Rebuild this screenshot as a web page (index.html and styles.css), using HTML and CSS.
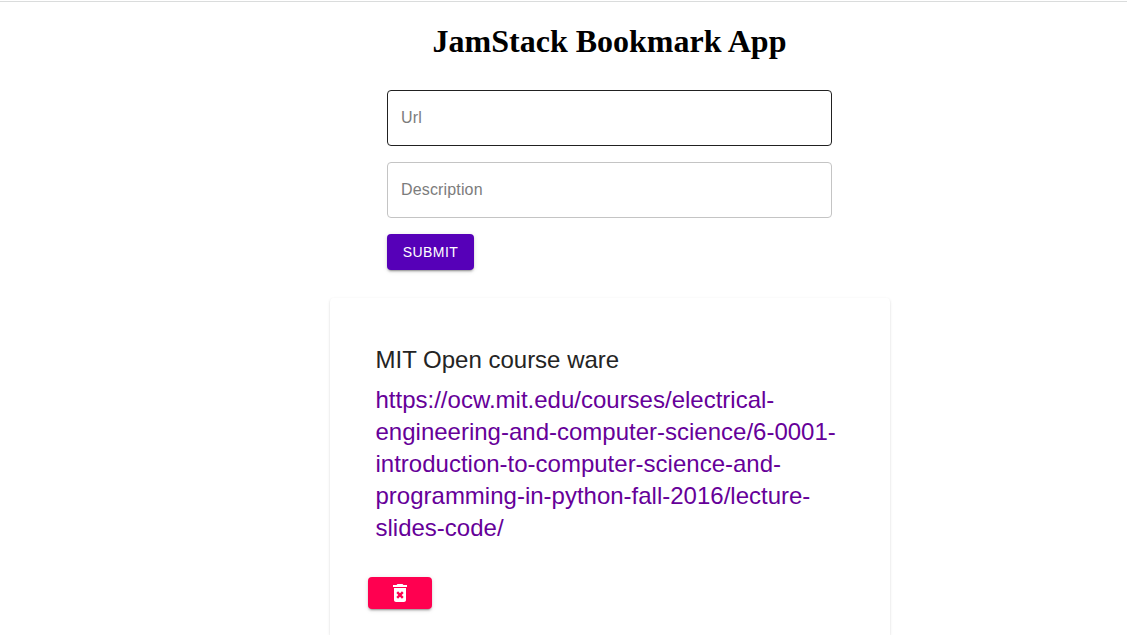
FILE: index.html
```html
<!DOCTYPE html>
<html lang="en">
<head>
<meta charset="utf-8">
<title>JamStack Bookmark App</title>
<link rel="stylesheet" href="styles.css">
</head>
<body>
<main class="app">
  <h1 class="title">JamStack Bookmark App</h1>
  <form class="form">
    <input class="field field-active" type="text" placeholder="Url" aria-label="Url">
    <input class="field" type="text" placeholder="Description" aria-label="Description">
    <button class="submit" type="button">SUBMIT</button>
  </form>
  <section class="card">
    <h2 class="card-title">MIT Open course ware</h2>
    <a class="card-link" href="#">https://ocw.mit.edu/courses/electrical-engineering-and-computer-science/6-0001-introduction-to-computer-science-and-programming-in-python-fall-2016/lecture-slides-code/</a>
    <button class="delete" type="button" aria-label="Delete">
      <svg class="icon" viewBox="0 0 24 24"><path d="M6 19c0 1.100.9 2 2 2h8c1.100 0 2-.9 2-2V7H6v12zM15.500 4l-1-1h-5l-1 1H5v2h14V4z"/><path class="icon-cross" d="M9.200 11.200l5.600 5.600M14.800 11.200l-5.600 5.600"/></svg>
    </button>
  </section>
</main>
</body>
</html>
```
FILE: styles.css
```css
* { box-sizing: border-box; }
body {
  margin: 0;
  height: 635px;
  overflow: hidden;
  background: #fff;
  font-family: "Liberation Sans", Arial, sans-serif;
}
.app {
  height: 635px;
  padding: 22px 0 0 92px;
  display: flex;
  flex-direction: column;
  align-items: center;
  background: linear-gradient(#fff 1px, #dadcdc 1px, #dadcdc 2px, #fff 2px);
}
.title {
  margin: 0;
  font: bold 32px/38px "Liberation Serif", "Times New Roman", serif;
  color: #000;
}
.form {
  width: 445px;
  margin-top: 30px;
  display: flex;
  flex-direction: column;
  align-items: flex-start;
  gap: 16px;
}
.field {
  width: 100%;
  height: 56px;
  padding: 0 13px;
  border: 1px solid #c4c4c4;
  border-radius: 4px;
  background: transparent;
  font: 16px "Liberation Sans", Arial, sans-serif;
  letter-spacing: 0.15px;
}
.field-active { border-color: #212121; }
.field::placeholder { color: #7c7c7c; opacity: 1; }
.submit {
  width: 87px;
  height: 36px;
  padding: 0;
  border: 0;
  border-radius: 4px;
  background: #5600b8;
  color: #fff;
  font: 14px "Liberation Sans", Arial, sans-serif;
  letter-spacing: 0.4px;
  box-shadow: 0 3px 1px -2px rgba(0,0,0,.2), 0 2px 2px rgba(0,0,0,.14), 0 1px 5px rgba(0,0,0,.12);
}
.card {
  flex: 1;
  width: 560px;
  margin-top: 28px;
  padding: 46px 46px 0;
  border-radius: 4px 4px 0 0;
  box-shadow: 0 2px 1px -1px rgba(0,0,0,.2), 0 1px 1px rgba(0,0,0,.14), 0 1px 3px rgba(0,0,0,.12);
  display: flex;
  flex-direction: column;
  align-items: flex-start;
}
.card-title {
  margin: 0 0 8px;
  font-size: 24px;
  line-height: 32px;
  font-weight: 400;
  color: #242424;
}
.card-link {
  font-size: 24px;
  line-height: 32px;
  color: #609;
  text-decoration: none;
}
.delete {
  width: 64px;
  height: 32px;
  margin: 33px 0 0 -8px;
  padding: 0;
  border: 0;
  border-radius: 4px;
  background: #ff0050;
  display: flex;
  align-items: center;
  justify-content: center;
  box-shadow: 0 3px 1px -2px rgba(0,0,0,.2), 0 2px 2px rgba(0,0,0,.14), 0 1px 5px rgba(0,0,0,.12);
}
.icon { width: 24px; height: 24px; fill: #fff; }
.icon-cross { fill: none; stroke: #ff0050; stroke-width: 2.4; }
```
